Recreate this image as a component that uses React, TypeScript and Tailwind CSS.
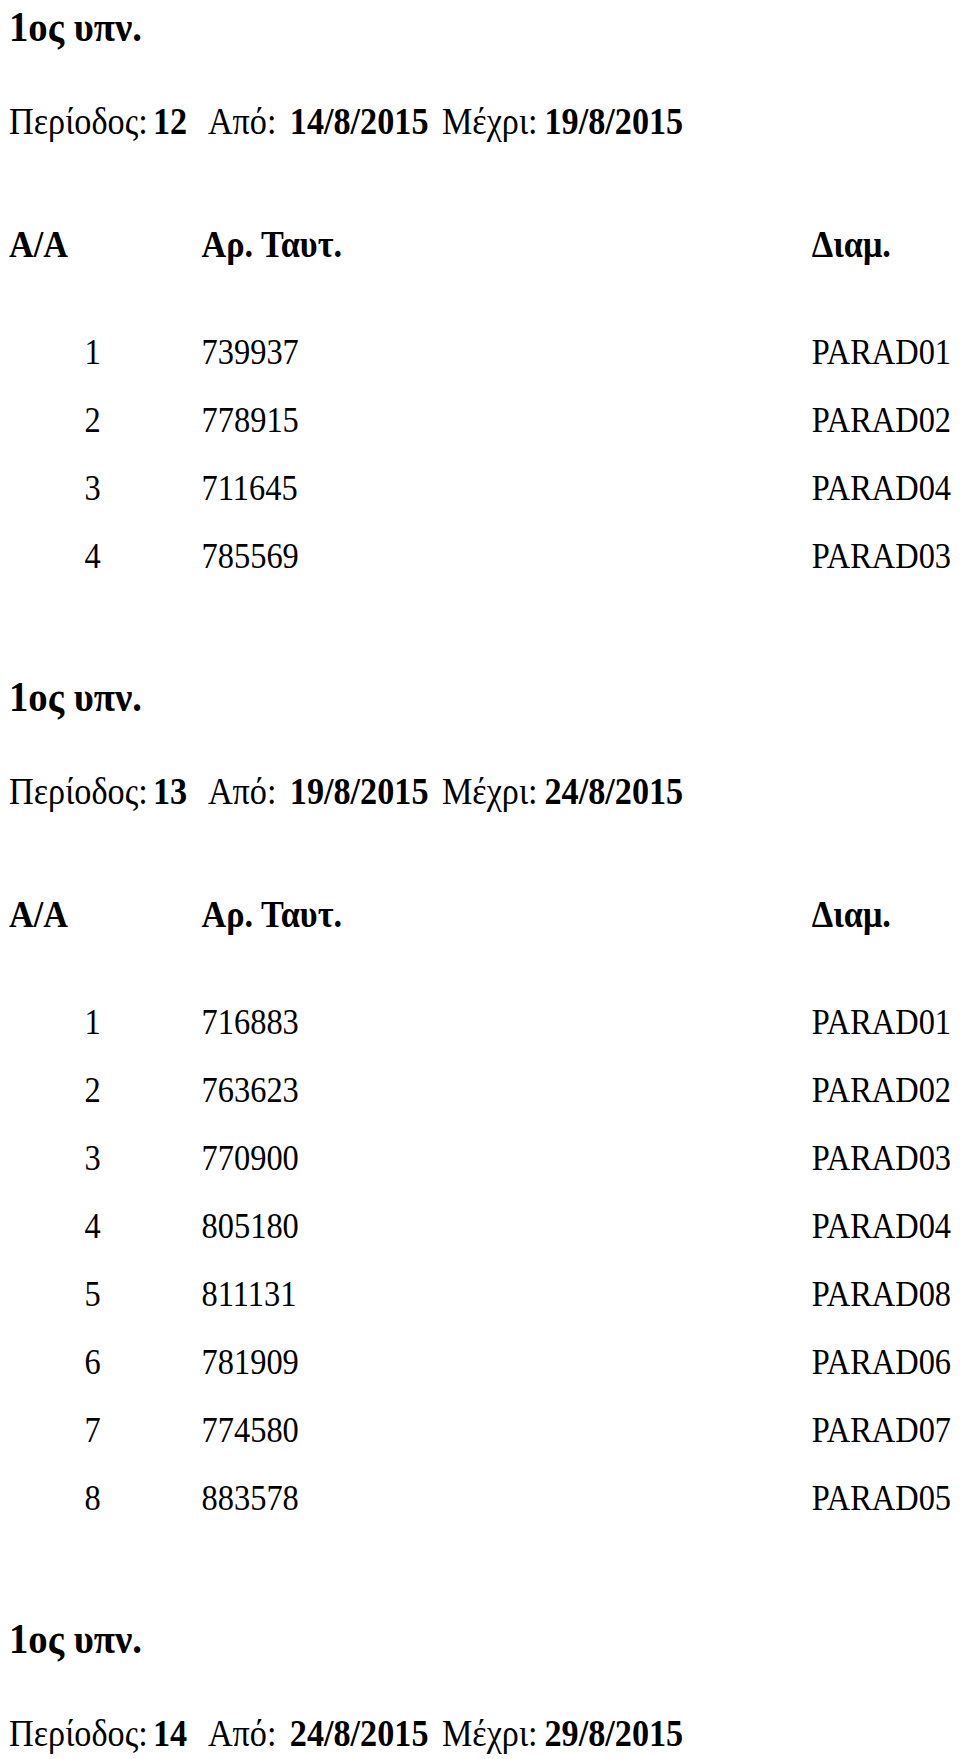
import React from "react";

type Row = [string, string, string];
type Section = { period: string; from: string; to: string; rows: Row[] };

const sections: Section[] = [
  {
    period: "12",
    from: "14/8/2015",
    to: "19/8/2015",
    rows: [
      ["1", "739937", "PARAD01"],
      ["2", "778915", "PARAD02"],
      ["3", "711645", "PARAD04"],
      ["4", "785569", "PARAD03"],
    ],
  },
  {
    period: "13",
    from: "19/8/2015",
    to: "24/8/2015",
    rows: [
      ["1", "716883", "PARAD01"],
      ["2", "763623", "PARAD02"],
      ["3", "770900", "PARAD03"],
      ["4", "805180", "PARAD04"],
      ["5", "811131", "PARAD08"],
      ["6", "781909", "PARAD06"],
      ["7", "774580", "PARAD07"],
      ["8", "883578", "PARAD05"],
    ],
  },
  { period: "14", from: "24/8/2015", to: "29/8/2015", rows: [] },
];

function Block({ s, first }: { s: Section; first: boolean }) {
  return (
    <div className={first ? "" : "mt-[81px]"}>
      <div className="h-[52px] leading-[52px] text-[43px] font-bold whitespace-nowrap">1ος υπν.</div>
      <div className="mt-[46px] h-[44px] leading-[44px] text-[38px] whitespace-nowrap grid grid-cols-[160px_61px_91px_169px_114px_auto]">
        <span>Περίοδος:</span>
        <span className="font-bold">{s.period}</span>
        <span>Από:</span>
        <span className="font-bold">{s.from}</span>
        <span>Μέχρι:</span>
        <span className="font-bold">{s.to}</span>
      </div>
      {s.rows.length > 0 && (
        <>
          <div className="mt-[79px] h-[44px] leading-[44px] text-[38px] font-bold whitespace-nowrap grid grid-cols-[214px_678px_1fr]">
            <div>Α/Α</div>
            <div>Αρ. Ταυτ.</div>
            <div>Διαμ.</div>
          </div>
          <div className="mt-[52px] flex flex-col">
            {s.rows.map((r) => (
              <div
                key={r[0]}
                className="h-[68px] leading-[68px] text-[36px] whitespace-nowrap grid grid-cols-[214px_678px_1fr]"
              >
                <div className="pl-[84px]">{r[0]}</div>
                <div>{r[1]}</div>
                <div>{r[2]}</div>
              </div>
            ))}
          </div>
        </>
      )}
    </div>
  );
}

export default function App() {
  return (
    <div className="w-[960px] min-h-[1759px] overflow-hidden bg-white text-black">
      <div
        className="w-[1067px] pl-[10px] pt-[1px] origin-top-left scale-x-[0.9]"
        style={{ fontFamily: '"Liberation Serif", "Times New Roman", serif' }}
      >
        {sections.map((s, i) => (
          <Block key={i} s={s} first={i === 0} />
        ))}
      </div>
    </div>
  );
}
